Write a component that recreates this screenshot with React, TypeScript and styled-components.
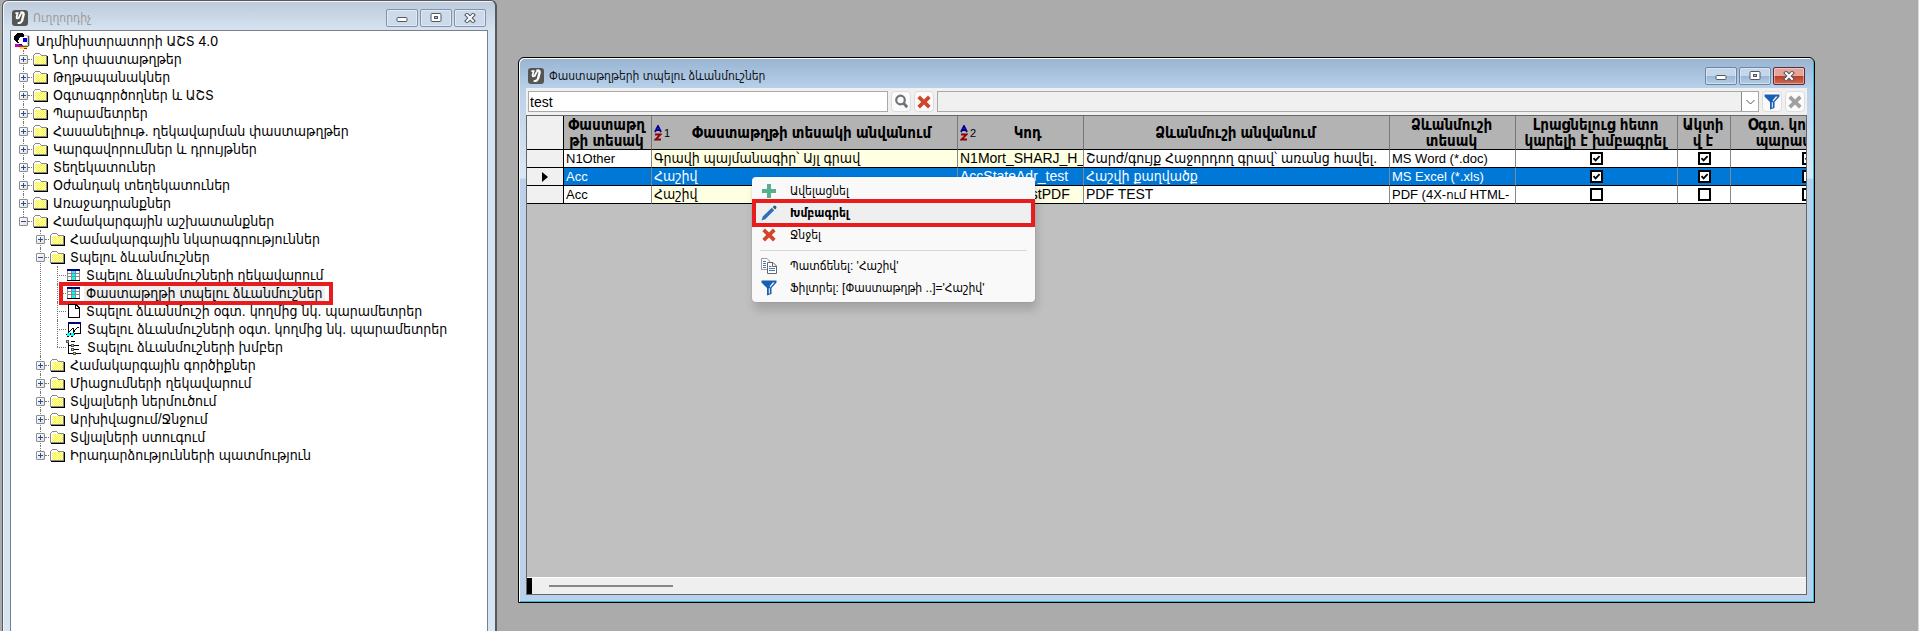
import React from 'react';
import styled, { createGlobalStyle, css } from 'styled-components';

const GlobalStyle = createGlobalStyle`
  *, *::before, *::after { box-sizing: border-box; }
  body {
    margin: 0;
    background: #ababab;
    font-family: "Liberation Sans", "DejaVu Sans Condensed", sans-serif;
    font-size: 14px;
    color: #000;
  }
  button, input { font: inherit; }
  ul { list-style: none; margin: 0; padding: 0; }
`;

const Desktop = styled.main`
  display: flex;
  align-items: stretch;
  min-height: 100vh;
  overflow: hidden;
  padding-left: 2px;
  background: #ababab;
  border-right: 1px solid #d8d8d8;
`;

/* ---------- window chrome ---------- */

const Window = styled.section<{ $active?: boolean }>`
  display: flex;
  flex-direction: column;
  position: relative;
  border-radius: 6px 6px 0 0;
  ${({ $active }) =>
    $active
      ? css`
          flex: 1;
          min-width: 0;
          margin: 57px 103px 28px 21px;
          padding: 0 7px 7px;
          border: 1px solid #000;
          box-shadow: inset 1px 1px #fff, inset -1px -1px #34b9d6;
          background: linear-gradient(#98b4d2, #b9d1ea 31px, #dce8f6 120px, #b9d1ea 121px);
        `
      : css`
          flex: none;
          width: 495px;
          padding: 0 7px;
          border: 1px solid #55585c;
          border-right-width: 2px;
          border-bottom: 0;
          box-shadow: inset 1px 1px #f2f6fa;
          background: linear-gradient(#bccad9, #d7e4f2 31px);
        `}
`;

const TitleBar = styled.header<{ $active?: boolean }>`
  display: flex;
  align-items: center;
  height: ${({ $active }) => ($active ? 30 : 29)}px;
  padding: 5px 2px 0;
  gap: 5px;
`;

const Title = styled.h1<{ $active?: boolean }>`
  flex: 1;
  margin: 0;
  font-size: 12px;
  font-weight: 400;
  line-height: 16px;
  color: ${({ $active }) => ($active ? '#101418' : '#9a9a9a')};
`;

const Captions = styled.div`
  display: flex;
  gap: 2px;
`;

const CaptionButton = styled.button<{ $tone: 'idle' | 'active' | 'close' }>`
  display: grid;
  place-items: center;
  width: 32px;
  height: 18px;
  padding: 0;
  border-radius: 2px;
  border: 1px solid
    ${({ $tone }) => ($tone === 'idle' ? '#8492b0' : $tone === 'active' ? '#6d84a3' : '#5c2a30')};
  box-shadow: inset 0 0 0 1px rgba(255, 255, 255, 0.4);
  background: ${({ $tone }) =>
    $tone === 'idle'
      ? '#cddaea'
      : $tone === 'active'
        ? 'linear-gradient(#c3d6ea 50%, #9ab6d3 50%, #b5cee6)'
        : 'linear-gradient(#e6a398 50%, #bc3c26 50%, #cf6a50)'};
`;

/* ---------- navigator tree ---------- */

const TreePane = styled.nav`
  flex: 1;
  padding: 1px 0 0 3px;
  background: #fff;
  border: 1px solid #7a7f8c;
  border-bottom: 0;
`;

const TreeRow = styled.div`
  display: flex;
  align-items: center;
  height: 18px;
`;

const Branch = styled.ul<{ $level: number }>`
  margin-left: ${({ $level }) => ($level === 1 ? 9 : 17)}px;
`;

const Node = styled.li`
  position: relative;
  &::before {
    content: '';
    position: absolute;
    left: 0;
    top: 0;
    bottom: 0;
    border-left: 1px dotted #777;
  }
  &:last-child::before {
    bottom: auto;
    height: 9px;
  }
`;

const Dots = styled.span<{ $leaf?: boolean }>`
  flex: none;
  width: ${({ $leaf }) => ($leaf ? 9 : 4)}px;
  margin: 0 ${({ $leaf }) => ($leaf ? 0 : 1)}px 0 0;
  border-top: 1px dotted #777;
`;

const Twisty = styled.button`
  display: grid;
  place-items: center;
  flex: none;
  position: relative;
  width: 9px;
  height: 9px;
  margin-left: -4px;
  padding: 0;
  border: 1px solid #8c8c8c;
  border-radius: 1px;
  background: linear-gradient(135deg, #fff, #e0e0e0);
`;

const Caption = styled.span<{ $selected?: boolean }>`
  margin-left: 3px;
  padding: 0 2px;
  line-height: 16px;
  white-space: nowrap;
  background: ${({ $selected }) => ($selected ? '#efefef' : 'transparent')};
`;

const NodeMark = styled.span`
  position: absolute;
  left: 2px;
  top: -2px;
  width: 274px;
  height: 23px;
  border: 4px solid #e81c1c;
  pointer-events: none;
`;

/* ---------- list window ---------- */

const Client = styled.div`
  flex: 1;
  display: flex;
  flex-direction: column;
  min-height: 0;
  background: #f0f0f0;
`;

const Toolbar = styled.form`
  display: flex;
  align-items: center;
  height: 27px;
  gap: 3px;
  padding: 0 2px;
`;

const SearchBox = styled.input`
  flex: none;
  width: 360px;
  height: 21px;
  padding: 0 1px;
  border: 1px solid #a8a8a8;
  border-radius: 0;
  background: #fff;
`;

const FilterBox = styled.div`
  flex: 1;
  display: flex;
  height: 21px;
  min-width: 0;
  border: 1px solid #a8a8a8;
`;

const FilterInput = styled.input`
  flex: 1;
  min-width: 0;
  border: 0;
  padding: 0 2px;
  background: #f0f0f0;
`;

const DropButton = styled.button`
  display: grid;
  place-items: center;
  width: 17px;
  padding: 0;
  border: 1px solid #888;
  border-width: 0 0 0 1px;
  background: #fff;
`;

const ToolButton = styled.button`
  display: grid;
  place-items: center;
  flex: none;
  width: 20px;
  height: 21px;
  padding: 0;
  border: 1px solid #dcdcdc;
  border-radius: 4px;
  background: #fbfbfb;
`;

const GridPane = styled.div`
  flex: 1;
  display: flex;
  flex-direction: column;
  min-height: 0;
  overflow: hidden;
  border: 1px solid #666;
  background: #c0c0c0;
`;

const GridBody = styled.div`
  flex: 1;
  overflow: hidden;
`;

const Grid = styled.table`
  table-layout: fixed;
  width: 1359px;
  border-collapse: separate;
  border-spacing: 0;
`;

const Col = styled.col<{ $w: number }>`
  width: ${({ $w }) => $w}px;
`;

const HeadCell = styled.th`
  height: 34px;
  padding: 0;
  border-right: 1px solid #777;
  border-bottom: 1px solid #000;
  background: #b3b3b3;
  font-size: 15px;
  line-height: 16px;
  white-space: nowrap;
  overflow: hidden;
`;

const HeadInner = styled.div`
  display: flex;
  align-items: center;
  padding: 0 4px 0 2px;
`;

const HeadText = styled.span`
  flex: 1;
`;

const SortOrder = styled.span`
  margin-left: 2px;
  font-size: 11px;
  font-weight: 400;
`;

const Gutter = styled.th`
  height: 18px;
  padding: 0;
  border-right: 1px solid #000;
  border-bottom: 1px solid #000;
  background: #f0f0f0;
  line-height: 0;
`;

const Cell = styled.td<{ $tint?: boolean; $selected?: boolean; $latin?: boolean }>`
  height: 18px;
  padding: 0 2px;
  border-right: 1px solid #888;
  border-bottom: 1px solid #000;
  font-size: ${({ $latin }) => ($latin ? 13 : 14)}px;
  line-height: 17px;
  white-space: nowrap;
  overflow: hidden;
  background: ${({ $tint, $selected }) => ($selected ? '#0078d7' : $tint ? '#ffffe1' : '#fff')};
  color: ${({ $selected }) => ($selected ? '#fff' : '#000')};
`;

const Tick = styled.input`
  appearance: none;
  display: block;
  width: 13px;
  height: 13px;
  margin: 0 auto;
  border: 2px solid #000;
  background: #fff;
  &:checked {
    background: #fff
      url("data:image/svg+xml,%3Csvg xmlns='http://www.w3.org/2000/svg' viewBox='0 0 9 9'%3E%3Cpath d='M1.5 4.2 L3.6 6.4 L7.6 2.2' fill='none' stroke='%23000' stroke-width='1.8'/%3E%3C/svg%3E")
      center / 9px 9px no-repeat;
  }
`;

const ScrollBar = styled.div`
  display: flex;
  align-items: center;
  height: 17px;
  background: #efefef;
  border-top: 1px solid #fff;
`;

const SplitBox = styled.span`
  width: 5px;
  height: 100%;
  background: #000;
`;

const Thumb = styled.span`
  width: 124px;
  height: 2px;
  margin-left: 17px;
  background: #868686;
`;

/* ---------- context menu ---------- */

const Menu = styled.ul`
  position: absolute;
  left: 233px;
  top: 119px;
  width: 283px;
  && { padding: 3px 0; }
  border-radius: 4px;
  background: #f9f9f9;
  box-shadow: 0 0 1px rgba(0, 0, 0, 0.35), 2px 8px 10px rgba(0, 0, 0, 0.15);
`;

const MenuItem = styled.li`
  position: relative;
`;

const MenuButton = styled.button<{ $default?: boolean }>`
  display: flex;
  align-items: center;
  gap: 13px;
  width: 100%;
  height: 22px;
  padding: 0 9px;
  border: 0;
  text-align: left;
  font-size: 12px;
  font-weight: ${({ $default }) => ($default ? 700 : 400)};
  color: #000;
  background: ${({ $default }) => ($default ? '#efefef' : 'transparent')};
`;

const MenuRule = styled.li`
  height: 9px;
  margin: 0 8px;
  background: linear-gradient(#d8d8d8, #d8d8d8) center / 100% 1px no-repeat;
`;

const MenuMark = styled.span`
  position: absolute;
  inset: -3px 0 -3px 0;
  border: 4px solid #e81c1c;
  pointer-events: none;
`;

/* ---------- icons ---------- */

const AppIcon = () => (
  <svg width="16" height="16" viewBox="0 0 16 16">
    <rect width="16" height="16" rx="3" fill="#555" />
    <g fill="none" stroke="#fff">
      <path d="M3.4 3.2 H5.6 L4.6 7.2 Q4.6 9 6.6 8 L9 3.4" strokeWidth="1.8" />
      <path d="M8.4 2.8 Q12 1.8 11.6 4.4 L10 11" strokeWidth="2.4" />
      <path d="M10.2 10 Q9.6 13.4 5.6 13.2" strokeWidth="1.8" />
    </g>
  </svg>
);

const CaptionGlyph = ({ kind }: { kind: 'min' | 'max' | 'close' }) => (
  <svg width="12" height="10" viewBox="0 0 12 10">
    {kind === 'min' && <rect x="1" y="4.5" width="10" height="4" rx="1" fill="#fff" stroke="#4f5868" />}
    {kind === 'max' && (
      <g fill="#fff" stroke="#4f5868">
        <rect x="1" y="0.5" width="10" height="8" rx="1" />
        <rect x="4.5" y="3.5" width="3" height="2" fill="#a9bed6" />
      </g>
    )}
    {kind === 'close' && (
      <g fill="none" strokeLinecap="square">
        <path d="M3 2 L9 8 M9 2 L3 8" stroke="#4f5868" strokeWidth="4" />
        <path d="M3 2 L9 8 M9 2 L3 8" stroke="#fff" strokeWidth="2" />
      </g>
    )}
  </svg>
);

const PersonIcon = () => (
  <svg width="17" height="17" viewBox="0 0 17 17" shapeRendering="crispEdges">
    <path d="M7 2 H14 L16 4 V12 L14 14 H8 Z" fill="#c8c8c8" />
    <path d="M14.5 3 V13 M9 13.5 H14" fill="none" stroke="#555" />
    <path d="M7 3 H13 V12 H7 Z" fill="#fff" />
    <path d="M9 5 H13 V9 H9 Z" fill="#0000d8" />
    <path d="M3 0 H9 L10 2 V4 H7 L5 7 V9 H3 L1 8 L0 5 L1 2 Z" fill="#000" />
    <path d="M5 5 L7 4 H9 V10 L6 11 L4 9 Z" fill="#fff" />
    <path d="M3 9.5 H5 M5 11.5 H8" fill="none" stroke="#000" />
    <path d="M1 11 H4 L6 12 H9 V14 H1 Z" fill="#c000c0" />
    <path d="M4 14 H13 V16 H6 Z" fill="#ffe000" />
    <path d="M10 15 H13 V16 H10 Z" fill="#e00000" />
  </svg>
);

const FolderIcon = () => (
  <svg width="15" height="13" viewBox="0 0 15 13" shapeRendering="crispEdges">
    <defs>
      <pattern id="dither" width="2" height="2" patternUnits="userSpaceOnUse">
        <rect width="2" height="2" fill="#fff" />
        <rect width="1" height="1" fill="#ff0" />
        <rect x="1" y="1" width="1" height="1" fill="#ff0" />
      </pattern>
    </defs>
    <path d="M0.5 11.5 V2.5 L2.5 0.5 H6.5 L8.5 2.5 H13.5 V11.5 Z" fill="#fff" stroke="#8a8a8a" />
    <rect x="2" y="3" width="11" height="8" fill="url(#dither)" />
    <path d="M14.5 3 V12.5 H1" fill="none" stroke="#000" />
  </svg>
);

const TableIcon = () => (
  <svg width="15" height="13" viewBox="0 0 15 13" shapeRendering="crispEdges">
    <rect x="1" width="13" height="12" fill="#fff" />
    <rect x="1" width="13" height="2" fill="#000080" />
    <rect x="6" y="2" width="4" height="9" fill="#0ff" />
    <path d="M1.5 2 V11 M5.5 2 V11 M9.5 2 V11 M13.5 2 V12 M1 4.5 H13 M1 7.5 H13" stroke="#8a8a8a" />
    <path d="M1 11.5 H14" stroke="#000" />
  </svg>
);

const PageIcon = () => (
  <svg width="15" height="14" viewBox="0 0 15 14" shapeRendering="crispEdges">
    <path d="M2.5 0.5 H10 L13.5 4 V13.5 H2.5 Z M9.5 0.5 V4.5 H13.5" fill="#fff" stroke="#000" />
  </svg>
);

const ChartIcon = () => (
  <svg width="16" height="15" viewBox="0 0 16 15" shapeRendering="crispEdges">
    <rect x="2.5" y="0.5" width="12" height="11" fill="#fff" stroke="#000" />
    <rect x="2" width="13" height="2" fill="#000080" />
    <path d="M2 11 L6.5 6.5 H7.5 V10 L11.5 5.5 H12.5" fill="none" stroke="#000" />
    <path d="M1 11 H4 V14 H1 Z M5 11 H8 V14 H5 Z" fill="#0ff" />
    <path d="M0 12.5 H1 M4 12.5 H5 M8 12.5 H9 M1 14.5 H3 M5 14.5 H7" stroke="#000" />
  </svg>
);

const GroupIcon = () => (
  <svg width="16" height="15" viewBox="0 0 16 15" shapeRendering="crispEdges">
    <path d="M2.5 1 V13.5 H7 M2.5 5.5 H5 M4.5 9.5 H6 M5 1.5 H9 M8 5.5 H13 M8 9.5 H13 M9 13.5 H15" fill="none" stroke="#000" />
    <rect x="0.5" y="0.5" width="2" height="2" fill="#ccc" stroke="#555" />
    <rect x="5" y="4" width="2" height="2" fill="#ee0" stroke="#555" />
    <rect x="5" y="8" width="2" height="2" fill="#ccc" stroke="#555" />
    <rect x="7" y="12" width="2" height="2" fill="#ee0" stroke="#555" />
  </svg>
);

const SearchIcon = () => (
  <svg width="15" height="15" viewBox="0 0 15 15" fill="none" stroke="#6f7478">
    <circle cx="6.5" cy="6" r="4.3" strokeWidth="2.2" />
    <path d="M9.6 9.2 L13.2 13.2" strokeWidth="2.8" />
  </svg>
);

const CrossIcon = ({ color }: { color: string }) => (
  <svg width="16" height="16" viewBox="0 0 16 16">
    <path d="M1.4 4.2 L4 1.6 L8 5.4 L12 1.6 L14.6 4.2 L10.8 8 L14.6 11.8 L12 14.4 L8 10.6 L4 14.4 L1.4 11.8 L5.2 8 Z" fill={color} />
  </svg>
);

const FunnelIcon = () => (
  <svg width="16" height="16" viewBox="0 0 16 16">
    <path d="M0.5 0.5 H15.5 V2.5 L10.5 8 V14 L6 15.6 V8 L0.5 2.5 Z" fill="#1560b5" />
    <path d="M9.2 7.6 L13.6 2.4 H11.8 L8.6 6.6 Z M7.8 8.2 H8.8 V13.4 L7.8 13.8 Z" fill="#fff" />
  </svg>
);

const PlusIcon = () => (
  <svg width="16" height="16" viewBox="0 0 16 16">
    <path d="M6 1 H10 V6 H15 V10 H10 V15 H6 V10 H1 V6 H6 Z" fill="#56b08c" />
  </svg>
);

const PencilIcon = () => (
  <svg width="16" height="16" viewBox="0 0 16 16">
    <path d="M0.5 15.5 L1.8 11.6 L10.8 2.8 L13.2 5.2 L4.2 14.2 Z" fill="#2f6fb5" />
    <path d="M11.6 2 L13 0.7 Q14 0.2 15 1.2 Q15.9 2.2 15.2 3.2 L14 4.4 Z" fill="#2c5c94" />
  </svg>
);

const CopyIcon = () => (
  <svg width="16" height="16" viewBox="0 0 16 16" fill="#fff">
    <path d="M0.5 0.5 H6 L8.5 3 V11.5 H0.5 Z" stroke="#9a9a9a" />
    <path d="M2 3.5 H5 M2 5.5 H5 M2 7.5 H5 M2 9.5 H5" stroke="#4a78b5" />
    <path d="M6.5 4.5 H12 L15.5 8 V15.5 H6.5 Z M11.5 4.5 V8.5 H15.5" stroke="#666" />
    <path d="M8 8.5 H10.5 M8 10.5 H14 M8 12.5 H14" stroke="#4a78b5" />
  </svg>
);

const SortIcon = () => (
  <svg width="8" height="16" viewBox="0 0 8 16" fill="none" strokeWidth="1.8">
    <path d="M1 7 L4 1 L7 7 M2 5 H6" stroke="#000090" />
    <path d="M1 9.5 H6.4 L1.6 14.5 H7" stroke="#900000" />
  </svg>
);

/* ---------- data ---------- */

type TreeItem = {
  label: string;
  icon?: 'table' | 'page' | 'chart' | 'group';
  selected?: boolean;
  children?: TreeItem[];
};

const tree: TreeItem[] = [
  { label: 'Նոր փաստաթղթեր' },
  { label: 'Թղթապանակներ' },
  { label: 'Օգտագործողներ և ԱՇՏ' },
  { label: 'Պարամետրեր' },
  { label: 'Հասանելիութ. ղեկավարման փաստաթղթեր' },
  { label: 'Կարգավորումներ և դրույթներ' },
  { label: 'Տեղեկատուներ' },
  { label: 'Օժանդակ տեղեկատուներ' },
  { label: 'Առաջադրանքներ' },
  {
    label: 'Համակարգային աշխատանքներ',
    children: [
      { label: 'Համակարգային նկարագրություններ' },
      {
        label: 'Տպելու ձևանմուշներ',
        children: [
          { label: 'Տպելու ձևանմուշների ղեկավարում', icon: 'table' },
          { label: 'Փաստաթղթի տպելու ձևանմուշներ', icon: 'table', selected: true },
          { label: 'Տպելու ձևանմուշի օգտ. կողմից նկ. պարամետրեր', icon: 'page' },
          { label: 'Տպելու ձևանմուշների օգտ. կողմից նկ. պարամետրեր', icon: 'chart' },
          { label: 'Տպելու ձևանմուշների խմբեր', icon: 'group' },
        ],
      },
      { label: 'Համակարգային գործիքներ' },
      { label: 'Միացումների ղեկավարում' },
      { label: 'Տվյալների ներմուծում' },
      { label: 'Արխիվացում/Ջնջում' },
      { label: 'Տվյալների ստուգում' },
      { label: 'Իրադարձությունների պատմություն' },
    ],
  },
];

const leafIcons = { table: TableIcon, page: PageIcon, chart: ChartIcon, group: GroupIcon };

const columns: { lines: string[]; width: number; sort?: number; latin?: boolean; tint?: boolean }[] = [
  { lines: ['Փաստաթղ', 'թի տեսակ'], width: 88, latin: true },
  { lines: ['Փաստաթղթի տեսակի անվանում'], width: 306, sort: 1, tint: true },
  { lines: ['Կոդ'], width: 126, sort: 2, tint: true },
  { lines: ['Ձևանմուշի անվանում'], width: 306 },
  { lines: ['Ձևանմուշի', 'տեսակ'], width: 126, latin: true },
  { lines: ['Լրացնելուց հետո', 'կարելի է խմբագրել'], width: 162 },
  { lines: ['Ակտի', 'վ է'], width: 53 },
  { lines: ['Օգտ. կողմից նկ.', 'պարամետրեր'], width: 155 },
];

const rows = [
  { text: ['N1Other', 'Գրավի պայմանագիր՝ Այլ գրավ', 'N1Mort_SHARJ_H_Y', 'Շարժ/գույք Հաջորդող գրավ՝ առանց հավել.', 'MS Word (*.doc)'], ticks: [true, true, true] },
  { text: ['Acc', 'Հաշիվ', 'AccStateAdr_test', 'Հաշվի քաղվածք', 'MS Excel (*.xls)'], ticks: [true, true, false], selected: true },
  { text: ['Acc', 'Հաշիվ', 'AccStateTestPDF', 'PDF TEST', 'PDF (4X-ում HTML-'], ticks: [false, false, false] },
];

/* ---------- parts ---------- */

const WindowButtons = ({ active }: { active?: boolean }) => (
  <Captions>
    {(['min', 'max', 'close'] as const).map((kind) => (
      <CaptionButton
        key={kind}
        type="button"
        aria-label={kind}
        $tone={!active ? 'idle' : kind === 'close' ? 'close' : 'active'}
      >
        <CaptionGlyph kind={kind} />
      </CaptionButton>
    ))}
  </Captions>
);

const TreeNode = ({ item, level }: { item: TreeItem; level: number }) => {
  const Icon = item.icon ? leafIcons[item.icon] : FolderIcon;
  return (
    <Node>
      <TreeRow>
        {!item.icon && (
          <Twisty type="button" aria-label={item.label}>
            <svg width="7" height="7" viewBox="0 0 7 7" stroke="#2a4a9a">
              <path d={item.children ? 'M1 3.5 H6' : 'M1 3.5 H6 M3.5 1 V6'} />
            </svg>
          </Twisty>
        )}
        <Dots $leaf={!!item.icon} />
        <Icon />
        <Caption $selected={item.selected}>{item.label}</Caption>
        {item.selected && <NodeMark />}
      </TreeRow>
      {item.children && (
        <Branch $level={level + 1}>
          {item.children.map((child) => (
            <TreeNode key={child.label} item={child} level={level + 1} />
          ))}
        </Branch>
      )}
    </Node>
  );
};

const Navigator = () => (
  <Window>
    <TitleBar>
      <AppIcon />
      <Title>Ուղղորդիչ</Title>
      <WindowButtons />
    </TitleBar>
    <TreePane>
      <TreeRow>
        <PersonIcon />
        <Caption>Ադմինիստրատորի ԱՇՏ 4.0</Caption>
      </TreeRow>
      <Branch $level={1}>
        {tree.map((item) => (
          <TreeNode key={item.label} item={item} level={1} />
        ))}
      </Branch>
    </TreePane>
  </Window>
);

const DocumentGrid = () => (
  <Grid>
    <colgroup>
      <Col $w={37} />
      {columns.map((c) => (
        <Col key={c.lines[0]} $w={c.width} />
      ))}
    </colgroup>
    <thead>
      <tr>
        <Gutter />
        {columns.map((c) => (
          <HeadCell key={c.lines[0]} scope="col">
            <HeadInner>
              {c.sort && <SortIcon />}
              {c.sort && <SortOrder>{c.sort}</SortOrder>}
              <HeadText>
                {c.lines[0]}
                {c.lines[1] && <br />}
                {c.lines[1]}
              </HeadText>
            </HeadInner>
          </HeadCell>
        ))}
      </tr>
    </thead>
    <tbody>
      {rows.map((row) => (
        <tr key={row.text[2]}>
          <Gutter scope="row">
            {row.selected && (
              <svg width="6" height="10" viewBox="0 0 6 10">
                <path d="M0 0 L6 5 L0 10 Z" />
              </svg>
            )}
          </Gutter>
          {row.text.map((text, i) => (
            <Cell key={i} $tint={columns[i].tint} $latin={columns[i].latin} $selected={row.selected}>
              {text}
            </Cell>
          ))}
          {row.ticks.map((on, i) => (
            <Cell key={i} $selected={row.selected}>
              <Tick type="checkbox" defaultChecked={on} aria-label={columns[i + 5].lines.join(' ')} />
            </Cell>
          ))}
        </tr>
      ))}
    </tbody>
  </Grid>
);

const ContextMenu = () => (
  <Menu>
    <MenuItem>
      <MenuButton type="button"><PlusIcon />Ավելացնել</MenuButton>
    </MenuItem>
    <MenuItem>
      <MenuButton type="button" $default><PencilIcon />Խմբագրել</MenuButton>
      <MenuMark />
    </MenuItem>
    <MenuItem>
      <MenuButton type="button"><CrossIcon color="#d0452b" />Ջնջել</MenuButton>
    </MenuItem>
    <MenuRule role="separator" />
    <MenuItem>
      <MenuButton type="button"><CopyIcon />Պատճենել: 'Հաշիվ'</MenuButton>
    </MenuItem>
    <MenuItem>
      <MenuButton type="button"><FunnelIcon />Ֆիլտրել: [Փաստաթղթի ..]='Հաշիվ'</MenuButton>
    </MenuItem>
  </Menu>
);

export default function App() {
  return (
    <>
      <GlobalStyle />
      <Desktop>
        <Navigator />
        <Window $active>
          <TitleBar $active>
            <AppIcon />
            <Title $active>Փաստաթղթերի տպելու ձևանմուշներ</Title>
            <WindowButtons active />
          </TitleBar>
          <Client>
            <Toolbar>
              <SearchBox type="text" defaultValue="test" aria-label="Որոնում" />
              <ToolButton type="button" aria-label="Որոնել"><SearchIcon /></ToolButton>
              <ToolButton type="button" aria-label="Մաքրել"><CrossIcon color="#d0452b" /></ToolButton>
              <FilterBox>
                <FilterInput type="text" readOnly aria-label="Ֆիլտր" />
                <DropButton type="button" aria-label="Ցուցակ">
                  <svg width="9" height="6" viewBox="0 0 9 6" fill="none" stroke="#555">
                    <path d="M0.5 1 L4.5 5 L8.5 1" />
                  </svg>
                </DropButton>
              </FilterBox>
              <ToolButton type="button" aria-label="Ֆիլտրել"><FunnelIcon /></ToolButton>
              <ToolButton type="button" aria-label="Հանել ֆիլտրը"><CrossIcon color="#a0a0a0" /></ToolButton>
            </Toolbar>
            <GridPane>
              <GridBody>
                <DocumentGrid />
              </GridBody>
              <ScrollBar>
                <SplitBox />
                <Thumb />
              </ScrollBar>
            </GridPane>
          </Client>
          <ContextMenu />
        </Window>
      </Desktop>
    </>
  );
}
